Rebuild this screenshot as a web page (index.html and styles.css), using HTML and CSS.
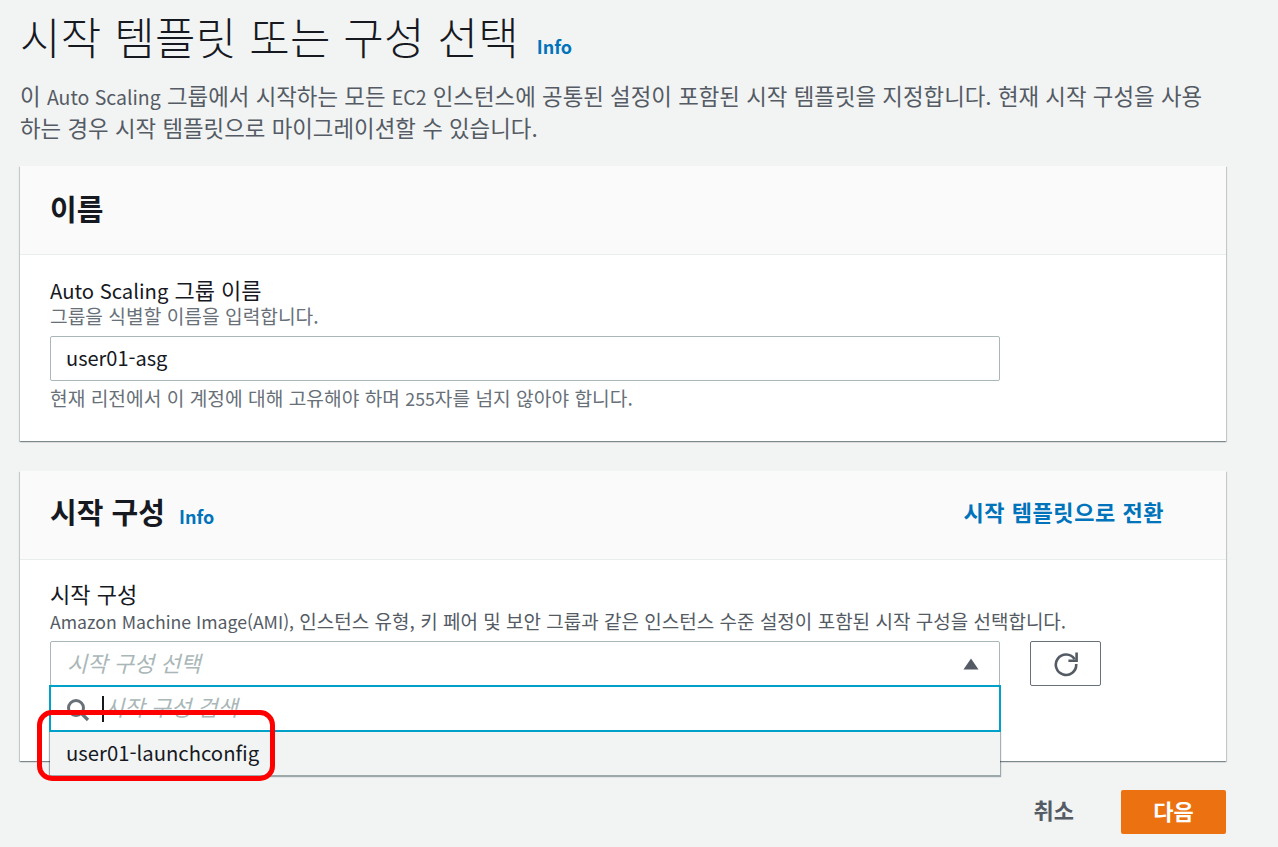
FILE: index.html
```html
<!DOCTYPE html>
<html lang="ko">
<head>
<meta charset="utf-8">
<title>시작 템플릿 또는 구성 선택</title>
<link rel="stylesheet" href="styles.css">
</head>
<body>
<main class="page">
  <header class="page-head">
    <h1 class="page-title">시작 템플릿 또는 구성 선택 <a class="info info-lg">Info</a></h1>
    <p class="page-desc">이 <span class="en">Auto Scaling</span> 그룹에서 시작하는 모든 <span class="en">EC2</span> 인스턴스에 공통된 설정이 포함된 시작 템플릿을 지정합니다. 현재 시작 구성을 사용<br>하는 경우 시작 템플릿으로 마이그레이션할 수 있습니다.</p>
  </header>

  <section class="card card-name">
    <div class="card-head"><h2 class="card-title">이름</h2></div>
    <div class="card-body">
      <div class="label"><span class="en">Auto Scaling</span> 그룹 이름</div>
      <div class="hint">그룹을 식별할 이름을 입력합니다.</div>
      <div class="field field-text">user01-asg</div>
      <div class="hint hint-after">현재 리전에서 이 계정에 대해 고유해야 하며 <span class="en">255</span>자를 넘지 않아야 합니다.</div>
    </div>
  </section>

  <section class="card card-config">
    <div class="card-head card-head-split">
      <h2 class="card-title">시작 구성 <a class="info info-md">Info</a></h2>
      <a class="switch-link">시작 템플릿으로 전환</a>
    </div>
    <div class="card-body">
      <div class="label">시작 구성</div>
      <div class="hint hint-dark"><span class="en">Amazon Machine Image(AMI),</span> 인스턴스 유형, 키 페어 및 보안 그룹과 같은 인스턴스 수준 설정이 포함된 시작 구성을 선택합니다.</div>
      <div class="select-row">
        <div class="select-wrap">
          <div class="field field-select">
            <span class="placeholder">시작 구성 선택</span>
            <svg class="caret" width="16" height="12" viewBox="0 0 16 12"><path d="M8 0.5 L15.5 11.5 H0.5 Z" fill="#545b64"/></svg>
          </div>
          <div class="menu">
            <div class="menu-search">
              <svg class="search-icon" width="24" height="24" viewBox="0 0 24 24"><circle cx="10" cy="10" r="7.5" fill="none" stroke="#687078" stroke-width="3"/><path d="M15.5 15.5 L22 22" stroke="#687078" stroke-width="3.2" fill="none"/></svg>
              <span class="cursor"></span>
              <span class="placeholder">시작 구성 검색</span>
            </div>
            <div class="menu-option">user01-launchconfig</div>
          </div>
        </div>
        <button class="refresh" type="button" aria-label="새로 고침">
          <svg width="26" height="26" viewBox="0 0 26 26"><path d="M21.6 8.2 A10.2 10.2 0 1 0 23.2 13" fill="none" stroke="#545b64" stroke-width="2.6"/><path d="M23.6 1.6 V9.8 H15.4" fill="none" stroke="#545b64" stroke-width="2.6"/></svg>
        </button>
      </div>
    </div>
  </section>

  <footer class="actions">
    <button class="btn-cancel" type="button">취소</button>
    <button class="btn-next" type="button">다음</button>
  </footer>
</main>
<div class="highlight"></div>
</body>
</html>
```
FILE: styles.css
```css
* { box-sizing: border-box; }
html, body { margin: 0; padding: 0; }
body {
  width: 1278px;
  height: 847px;
  overflow: hidden;
  position: relative;
  background: #f2f3f3;
  color: #16191f;
  font-family: "Noto Sans CJK KR", "Noto Sans", sans-serif;
}
.en { font-size: .92em; }
.page { padding: 0 52px 0 20px; width: 1278px; }
.page-head { height: 166px; padding-top: 7px; }
.page-title { margin: 0; font-size: 44px; line-height: 58px; font-weight: 300; letter-spacing: 0.3px; }
.info { color: #0073bb; font-weight: 700; letter-spacing: 0; }
.info-lg { font-size: 18px; margin-left: 5px; position: relative; top: -1px; }
.info-md { font-size: 18px; margin-left: 6px; }
.page-desc { margin: 4px 0 0; font-size: 22.4px; line-height: 30px; color: #545b64; font-weight: 400; }
.page-desc .en { font-size: .87em; }

.card { background: #fff; box-shadow: 0 1px 1px 0 rgba(0,28,36,.3), 1px 1px 1px 0 rgba(0,28,36,.15), -1px 1px 1px 0 rgba(0,28,36,.15); }
.card-name { height: 275px; margin-bottom: 30px; }
.card-config { height: 290px; }
.card-head { height: 89px; background: #fafafa; border-bottom: 1px solid #eaeded; padding: 0 30px 4px; display: flex; align-items: center; }
.card-head-split { justify-content: space-between; padding-right: 62px; }
.card-title { margin: 0; font-size: 29px; line-height: 40px; font-weight: 700; color: #16191f; }
.switch-link { font-size: 22px; font-weight: 700; color: #0073bb; letter-spacing: .55px; padding-bottom: 4px; }
.card-body { padding: 19px 30px 0; }
.card-name .card-body { padding-top: 20px; }
.label { font-size: 22px; line-height: 29px; color: #16191f; }
.hint { font-size: 19.2px; line-height: 22px; color: #687078; }
.hint-dark { color: #545b64; font-size: 19px; margin-top: 2px; }
.hint-dark .en { font-size: .93em; }
.hint-after { margin-top: 6px; }
.field { background: #fff; border: 1px solid #aab7b8; border-radius: 2px; height: 45px; width: 950px; display: flex; align-items: center; padding: 0 15px 3px; font-size: 20px; }
.field-text { margin-top: 9px; }
.select-row { display: flex; gap: 30px; margin-top: 8px; align-items: flex-start; }
.select-wrap { position: relative; width: 950px; }
.field-select { justify-content: space-between; padding: 0 20px 4px 16px; }
.placeholder { font-style: italic; color: #aab7b8; font-size: 22px; }
.caret { margin-top: 4px; }
.menu { position: absolute; left: -1px; right: -1px; top: 44px; z-index: 2; }
.menu-search { height: 47px; background: #fff; border: 2px solid #00a1c9; display: flex; align-items: center; padding: 0 0 5px 15px; position: relative; }
.search-icon { flex: none; margin-right: 12px; margin-top: 7px; }
.cursor { width: 2px; height: 26px; background: #16191f; flex: none; margin-top: 5px; }
.menu-option { margin: 0 1px; height: 43px; background: #f2f3f3; padding: 0 16px 4px; display: flex; align-items: center; font-size: 20.3px; color: #16191f; box-shadow: 0 1px 1px 1px rgba(0,28,36,.35); }
.refresh { width: 71px; height: 45px; border: 1px solid #687078; border-radius: 2px; background: #fff; display: flex; align-items: center; justify-content: center; padding: 0; }
.actions { display: flex; justify-content: flex-end; align-items: center; gap: 47px; margin-top: 29px; }
.btn-cancel { background: none; border: 0; padding: 0 0 6px; font: 700 22px "Noto Sans CJK KR", sans-serif; color: #545b64; }
.btn-next { width: 105px; height: 44px; background: #ec7211; border: 0; border-radius: 2px; color: #fff; font: 700 22px "Noto Sans CJK KR", sans-serif; padding: 0 0 5px; }
.highlight { position: absolute; left: 37px; top: 710px; width: 238px; height: 71px; border: 5px solid #f00; border-radius: 15px; z-index: 5; pointer-events: none; }
```
